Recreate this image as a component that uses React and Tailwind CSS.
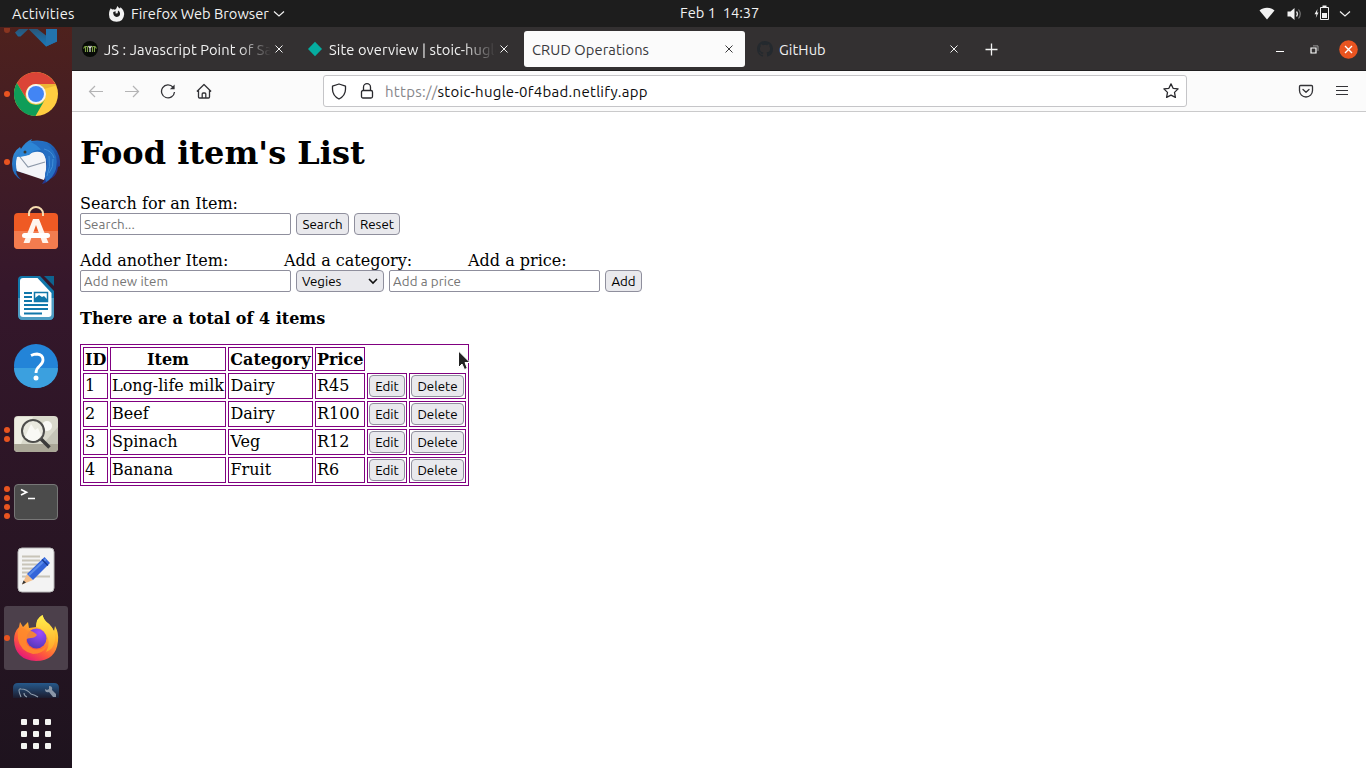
import React from "react";

const UI = "font-['Ubuntu','Noto_Sans',sans-serif]";

function Chevron({ className }) {
  return (
    <svg className={className} width="12" height="8" viewBox="0 0 12 8" fill="none" stroke="currentColor" strokeWidth="1.2">
      <path d="M1 1.5 6 6l5-4.5" />
    </svg>
  );
}

function TopBar() {
  return (
    <header className={`flex h-[27px] items-center bg-[#1d1d1d] text-[#f2f2f2] ${UI}`}>
      <div className="w-[108px] shrink-0 pl-3 text-[14.67px] leading-[26px] tracking-[0.25px] whitespace-nowrap">Activities</div>
      <svg width="17" height="16" viewBox="0 0 17 16" className="shrink-0" fill="#f2f2f2">
        <path fillRule="evenodd" d="M1.600 4.500 2.700 2.300 4.200 3.600Q5.500 3 7 3.700L8.300 2.500 9.400 0Q10.300 1.800 12 2.400L12.500 1.200Q16 4 16.200 8 15.700 15.700 8.600 15.800 1 15.500 1 8.500 1 6 1.600 4.500ZM7.600 5.300 5.200 6.100Q5 10.800 8.800 11 12.500 10.500 12 7 11.600 5 10 4.500L9.700 7.300 7.600 7.500Z" />
      </svg>
      <div className="ml-1.5 w-[139px] shrink-0 text-[14.67px] leading-[27px] whitespace-nowrap">Firefox Web Browser</div>
      <Chevron className="ml-[3px]" />
      <div className="ml-[395px] w-[90px] pb-px text-[14.67px] leading-[24px] whitespace-pre">Feb 1  14:37</div>
      <svg className="ml-auto" width="16" height="13" viewBox="0 0 16 13" fill="#f2f2f2"><path d="M.500 3.500C4.500-.200 11.500-.200 15.500 3.500L8 12.500Z" /></svg>
      <svg className="ml-3" width="16" height="14" viewBox="0 0 16 14" fill="none">
        <path d="M.500 4.500h3L7.500 1v12L3.500 9.500h-3Z" fill="#f2f2f2" />
        <path d="M9.500 4.500q2 2.500 0 5" stroke="#ddd" strokeWidth="1.300" />
        <path d="M11.500 2.500q3.500 4.500 0 9" stroke="#777" strokeWidth="1.200" />
      </svg>
      <svg className="mb-px ml-[11px]" width="16" height="16" viewBox="0 0 16 16" fill="none">
        <path d="M3.500 4 .5 9.300h2L1.800 13l2.700-5.500H3Z" fill="#f2f2f2" />
        <path d="M6.500 2.500h8v12h-8Z" stroke="#f2f2f2" />
        <path d="M8.500.5h4v2h-4ZM8 8h5v5H8Z" fill="#f2f2f2" />
      </svg>
      <Chevron className="mr-[15px] ml-[9px]" />
    </header>
  );
}

function Vscode() {
  return (
    <svg width="48" height="20" viewBox="0 0 48 20">
      <defs>
        <linearGradient id="vs" x1="0" y1="0" x2="0" y2="1">
          <stop offset="0" stopColor="#2a5678" /><stop offset="1" stopColor="#1679bd" />
        </linearGradient>
      </defs>
      <path d="M3 5.500 7 2h9.500L8.500 9.500H6ZM16.500 2h9L34 8.500V2h11v12.500L34 19.500Z" fill="url(#vs)" />
      <path d="M34 2h11v12.500L34 19.500Z" fill="#2373ad" />
    </svg>
  );
}

function Chrome() {
  return (
    <svg width="46" height="46" viewBox="0 0 46 46">
      <circle cx="23" cy="23" r="22" fill="#ffcd40" />
      <path d="M3.900 12A22 22 0 0 1 42.500 13H23A10.500 10.500 0 0 0 13.500 28Z" fill="#db4437" />
      <path d="M3.900 12A22 22 0 0 0 22.500 45L32 28.500A10.500 10.500 0 0 1 13.500 28Z" fill="#0f9d58" />
      <path d="M23 13h19.500l.7 1.500L31 18Z" fill="#e0a52f" opacity=".6" />
      <circle cx="23" cy="23" r="10" fill="#f4f4f4" />
      <circle cx="23" cy="23" r="8" fill="#4285f4" />
    </svg>
  );
}

function Thunderbird() {
  return (
    <svg width="50" height="50" viewBox="0 0 50 50">
      <defs>
        <linearGradient id="tb" x1="0" y1="0" x2="1" y2="1">
          <stop offset="0" stopColor="#3d9be0" /><stop offset=".5" stopColor="#1d63b7" /><stop offset="1" stopColor="#2a1e75" />
        </linearGradient>
      </defs>
      <path d="M1 27Q1 15 9 10l1 2q4-7 11-10l-1 2q16-2 23 6 7 8 6 19l-2 1q-1 8-6 11l-2 1q-3 4-8 5l3-5-9-3-20-5q1 6 6 9Q1 39 1 27Z" fill="url(#tb)" />
      <path d="M6 20q6-1 12-2 4-4 11-3 6 1 6 11 1 9-2 17L6 34Q4 27 6 20Z" fill="#f3f5f8" />
      <path d="m9 20 8 10 17-5" fill="none" stroke="#8c98a8" strokeWidth="1.200" />
      <path d="M8 20Q9 6 24 5q8 1 9 8-10-1-14 4-6 3-11 3Z" fill="#2d86d6" />
      <path d="M20 5q12-3 19 5 9 8 6 22-3 9-10 13-2-7 0-12 2-8-1-14-4-9-14-14Z" fill="#246ec2" />
      <path d="M33 12q8 2 10 9M38 19q2 11-2 20M42 22q1 8-4 14" fill="none" stroke="#418fd8" strokeWidth="1" />
      <circle cx="14" cy="15" r="1.500" fill="#3a3a32" />
    </svg>
  );
}

function Software() {
  return (
    <svg width="46" height="46" viewBox="0 0 46 46" className="-mt-1 h-[46px]">
      <path d="M16 12V8.500a7 6.500 0 0 1 14 0V12" fill="none" stroke="#f6dcb0" strokeWidth="2" />
      <rect x="1" y="8" width="44" height="36" rx="4" fill="#ef5a24" />
      <path d="M1 26h44v14q0 4-4 4H5q-4 0-4-4Z" fill="#f37c4f" />
      <path d="M16 8v3M30 8v3" stroke="#f6dcb0" strokeWidth="2" />
      <path d="M20 14h6l9.500 24h-6l-6.500-18-6.500 18h-6Z" fill="#fff4ed" />
      <rect x="9" y="28" width="28" height="5" rx="2.500" fill="#fff" />
    </svg>
  );
}

function Writer() {
  return (
    <svg width="46" height="46" viewBox="0 0 46 46">
      <path d="M9 1h18l14 15v24q0 5-5 5H10q-5 0-5-5V5q0-4 4-4Z" fill="#1177aa" />
      <path d="M5 23h36v17q0 5-5 5H10q-5 0-5-5Z" fill="#4d9cc2" />
      <path d="M31 1h10v10Z" fill="#0e638f" />
      <path d="M10 3h14.500L38.500 18v21q0 3-3 3H10q-3 0-3-3V6q0-3 3-3Z" fill="#fff" />
      <path d="M11 18h8M11 22h8M11 26h8M11 30h24M11 34h24M11 38.500h18" stroke="#1177aa" strokeWidth="2" />
      <rect x="21.500" y="17.500" width="13" height="9" fill="#fff" stroke="#1177aa" strokeWidth="1.500" />
      <path d="m22 26 0-3 4-3 3 2 2-1 3 3v3Z" fill="#1177aa" />
    </svg>
  );
}

function Help() {
  return (
    <svg width="46" height="46" viewBox="0 0 46 46">
      <circle cx="23" cy="23" r="22" fill="#2384d8" />
      <path d="M1 25h44a22 20 0 0 1-44 0Z" fill="#3ba0df" />
      <path d="M18 12.500q3-1.500 6-1.500 6 .5 6 6 0 3-3.500 6-3.500 3-3.500 7" fill="none" stroke="#fff" strokeWidth="2.800" />
      <circle cx="23" cy="35" r="2.500" fill="#fff" />
    </svg>
  );
}

function Viewer() {
  return (
    <svg width="46" height="46" viewBox="0 0 46 46">
      <rect x="1" y="5" width="44" height="36" rx="4" fill="#d9d9cb" />
      <path d="M1 33h44v4q0 4-4 4H5q-4 0-4-4Z" fill="#aaa797" />
      <path d="m30 33 15-17v17Z" fill="#c5c5b7" />
      <path d="M2 8q0-2 3-2h15L8 33H2Z" fill="#edede2" />
      <circle cx="34" cy="15" r="5" fill="#fafaf6" />
      <path d="m28 28 8.500 8.500" stroke="#3b3b39" strokeWidth="3.500" />
      <circle cx="20" cy="20" r="11" fill="#e9e9df" stroke="#4d4d4b" strokeWidth="2" />
      <path d="m12 26 6-13 4 6 3-2 3 7q-3 6-8 6-5-1-8-4Z" fill="#f9f9f5" />
    </svg>
  );
}

function Terminal() {
  return (
    <svg width="46" height="46" viewBox="0 0 46 46">
      <rect x="1.500" y="5.500" width="43" height="35" rx="3.500" fill="#4b4b4b" stroke="#777" />
      <path d="m8 10.500 5.500 2.700L8 16M15 19.500h7" fill="none" stroke="#fff" strokeWidth="1.700" />
    </svg>
  );
}

function Editor() {
  return (
    <svg width="46" height="46" viewBox="0 0 46 46">
      <rect x="5" y="1" width="36" height="44" rx="4" fill="#f3f3f3" stroke="#b9b9b9" />
      <path d="M9 9.500h18M9 13.500h18M9 17.500h16M9 21.500h15M9 25.500h12M9 29.500h28" stroke="#c8c4b8" strokeWidth="1.800" />
      <path d="m14 27 6 6-11 4.500Z" fill="#f3be8b" />
      <path d="m9 37.500 1.500-4 2.500 2Z" fill="#333" />
      <path d="M14 27 31.500 10l5.500 6-17 17Z" fill="#3465d9" />
      <path d="m16 28 17-16" stroke="#5a8bea" strokeWidth="2" />
      <path d="m29 12.500 6 6" stroke="#183b94" strokeWidth="1.500" />
    </svg>
  );
}

function Firefox() {
  return (
    <svg width="46" height="48" viewBox="0 0 46 48">
      <defs>
        <linearGradient id="ff" x1=".85" y1="0" x2=".25" y2="1">
          <stop offset="0" stopColor="#fff44f" /><stop offset=".35" stopColor="#ffb52a" /><stop offset=".7" stopColor="#ff5a3c" /><stop offset="1" stopColor="#e3107e" />
        </linearGradient>
        <linearGradient id="tail" x1="0" y1="0" x2="0" y2="1">
          <stop offset="0" stopColor="#fff04c" /><stop offset="1" stopColor="#ffa328" />
        </linearGradient>
        <radialGradient id="globe" cx=".65" cy=".2" r=".9">
          <stop offset="0" stopColor="#a04bff" /><stop offset="1" stopColor="#4f37b5" />
        </radialGradient>
      </defs>
      <path d="M29.500 1Q31 7 36 10q3 3 5 7l1-5Q46 19 45 27 43 47 23 47 2 46 1 26q0-8 5-13l1-5 3 5 5-5 1 6 7-1q1-9 6.500-12Z" fill="url(#ff)" />
      <path d="M29.500 1Q31 7 36 10q7 7 6 16-1 9-9 12 6-10-1-19-3-5-9-6 0-9 6.500-12Z" fill="url(#tail)" />
      <circle cx="23.500" cy="24.500" r="10" fill="url(#globe)" />
      <path d="M6 14q4-1 8 3 4-1 8 2l2 2q-2 3-6 3-4 0-5 2 0 6 7 9 7 2 14-3-4 8-14 8Q7 37 5 25q-1-6 1-11Z" fill="#ff8a2b" opacity=".9" />
    </svg>
  );
}

function Workbench() {
  return (
    <svg width="46" height="16" viewBox="0 0 46 16">
      <defs>
        <linearGradient id="wb" x1="0" y1="0" x2="0" y2="1">
          <stop offset="0" stopColor="#26598b" /><stop offset="1" stopColor="#1c1c2e" />
        </linearGradient>
      </defs>
      <path d="M0 16V6q0-5 5-5h36q5 0 5 5v10Z" fill="url(#wb)" />
      <path d="M8 15Q4 6 8 7q6 0 10 5 4 1 7 3M11 11q0 3 3 4" fill="none" stroke="#8e9dad" strokeWidth="1.100" />
      <path d="M32 7q0 4 4 3l4 5h3v-3l-4-4q1-4-3-4v3l-2 1Z" fill="#8a97a8" />
    </svg>
  );
}

const launchers = [
  { icon: Chrome, dots: 1 },
  { icon: Thunderbird, dots: 1 },
  { icon: Software, dots: 0 },
  { icon: Writer, dots: 0 },
  { icon: Help, dots: 0 },
  { icon: Viewer, dots: 2 },
  { icon: Terminal, dots: 4 },
  { icon: Editor, dots: 0 },
  { icon: Firefox, dots: 1, active: true },
];

function Dock() {
  return (
    <aside className="flex w-[72px] shrink-0 flex-col bg-linear-to-b from-[#4e211d] via-[#35172b] via-35% to-[#1e131e]">
      <div className="flex h-[33px] items-start pl-1">
        <i className="mt-[1px] h-[5px] w-[6px] rounded-b-full bg-[#8a3520]" />
        <div className="ml-[2px]"><Vscode /></div>
      </div>
      {launchers.map(({ icon: Icon, dots, active }, i) => (
        <div key={i} className="flex h-[68px] items-center pl-1">
          <div className={`flex h-16 w-16 items-center rounded-[3px] ${active ? "bg-[#4c404b]" : ""}`}>
            <div className="flex w-[6px] shrink-0 flex-col gap-[3px]">
              {Array.from({ length: dots }, (_, d) => <i key={d} className="size-[6px] rounded-full bg-[#e95420]" />)}
            </div>
            <div className="flex w-[52px] shrink-0 justify-center">
              <Icon />
            </div>
          </div>
        </div>
      ))}
      <div className="flex h-[28px] items-start justify-center pt-[10px]"><Workbench /></div>
      <div className="flex h-[68px] items-center justify-center">
        <div className="grid grid-cols-3 gap-[6px]">
          {Array.from({ length: 9 }, (_, i) => <i key={i} className="size-[6px] rounded-[1px] bg-[#f4f4f2]" />)}
        </div>
      </div>
    </aside>
  );
}

function Close() {
  return (
    <svg className="shrink-0" width="8" height="8" viewBox="0 0 8 8" stroke="currentColor" strokeWidth="1"><path d="m.5.500 7 7m0-7-7 7" /></svg>
  );
}

function Tab({ icon, title, active, fade }) {
  return (
    <div className={`mx-[2px] flex h-9 w-[221px] shrink-0 items-center rounded-[3px] pr-3 pl-2 ${active ? "bg-[#fbfbfb] text-[#39393b]" : "text-[#f1f1f1]"}`}>
      {icon && <span className="mr-[6px] shrink-0">{icon}</span>}
      <span className={`mr-[4px] min-w-0 flex-1 overflow-hidden pt-[2px] text-[14.67px] leading-[20px] tracking-[0.1px] whitespace-nowrap ${fade ? "mask-[linear-gradient(to_right,black_80%,transparent)]" : ""}`}>{title}</span>
      <Close />
    </div>
  );
}

function Tabs() {
  return (
    <div className={`flex h-[44px] items-start border-b border-[#1f1e1f] bg-[#333031] pt-1 text-[#f1f1f1] ${UI}`}>
      <Tab
        fade
        title="JS : Javascript Point of Sale"
        icon={
          <svg width="16" height="16" viewBox="0 0 16 16">
            <circle cx="8" cy="8" r="8" fill="#080b07" />
            <path d="M1.500 7.500 3 5.500h2.500M14.500 7.500 13 5.500h-2.500M3.500 6v5M5.500 5.500V11M10.500 5.500V11M12.500 6v5" stroke="#7da044" fill="none" strokeWidth="1.100" />
            <path d="m6.500 5 1.500 2L9.500 5M8 7v4" stroke="#d8ded0" fill="none" strokeWidth="1.300" />
          </svg>
        }
      />
      <Tab
        fade
        title="Site overview | stoic-hugle-0f4bad"
        icon={<svg width="16" height="16" viewBox="0 0 16 16"><path d="m8 .800 7 7.200-7 7.200L1 8Z" fill="#05ada0" /></svg>}
      />
      <Tab active title="CRUD Operations" />
      <Tab
        title="GitHub"
        icon={
          <svg width="16" height="16" viewBox="0 0 16 16" fill="#24292e">
            <path d="M8 0C3.580 0 0 3.580 0 8c0 3.540 2.290 6.530 5.470 7.590.4.070.55-.17.55-.38 0-.19-.01-.82-.01-1.490-2.010.37-2.530-.49-2.690-.94-.09-.23-.48-.94-.82-1.130-.28-.15-.68-.52-.01-.53.63-.01 1.080.58 1.230.82.72 1.210 1.870.87 2.330.66.07-.52.28-.87.51-1.070-1.780-.2-3.640-.89-3.640-3.950 0-.87.31-1.590.82-2.150-.08-.2-.36-1.020.08-2.120 0 0 .67-.21 2.200.82a7.500 7.500 0 0 1 4 0c1.530-1.040 2.200-.82 2.200-.82.44 1.100.16 1.920.08 2.120.51.56.82 1.270.82 2.150 0 3.070-1.870 3.750-3.650 3.950.29.25.54.73.54 1.480 0 1.070-.01 1.930-.01 2.200 0 .21.15.46.55.38A8 8 0 0 0 16 8c0-4.420-3.580-8-8-8Z" />
          </svg>
        }
      />
      <div className="flex h-9 flex-1 items-center">
        <svg className="ml-[13px]" width="13" height="13" viewBox="0 0 13 13" stroke="#f3f3f3" strokeWidth="1.300"><path d="M6.500.500v12m-6-6h12" /></svg>
        <svg className="ml-auto" width="8" height="8" viewBox="0 0 8 8"><path d="M0 6h8v1H0Z" fill="#fff" /></svg>
        <svg className="mr-[20px] ml-[26px]" width="9" height="9" viewBox="0 0 9 9" fill="none">
          <path d="M1 3h5v5H1Z" stroke="#fff" strokeWidth="1.200" /><path d="M3 .900h5v5" stroke="#999" />
        </svg>
        <svg className="mr-[8px]" width="19" height="19" viewBox="0 0 19 19">
          <circle cx="9.500" cy="9.500" r="9.300" fill="#e95420" /><path d="m6 6 7 7m0-7-7 7" stroke="#fff" strokeWidth="1.400" />
        </svg>
      </div>
    </div>
  );
}

function Toolbar() {
  return (
    <div className="flex h-[41px] items-center border-b border-[#cacacb] bg-[#fbfbfb] text-[#3b3b40]">
      <svg className="ml-4 text-[#b4b4b5]" width="16" height="16" viewBox="0 0 16 16" fill="none" stroke="currentColor" strokeWidth="1.200"><path d="M15 8.500H1.500M7 3 1.500 8.500 7 14" /></svg>
      <svg className="ml-5 text-[#b4b4b5]" width="16" height="16" viewBox="0 0 16 16" fill="none" stroke="currentColor" strokeWidth="1.200"><path d="M1 8.500h13.500M9 3l5.500 5.500L9 14" /></svg>
      <svg className="ml-5" width="16" height="16" viewBox="0 0 16 16" fill="none">
        <path d="M13 4.200A6.500 6.500 0 1 0 14.500 9" stroke="#333337" strokeWidth="1.300" /><path d="M14.600 1.500v4.700H9.900Z" fill="#333337" />
      </svg>
      <svg className="ml-[19.500px]" width="16" height="16" viewBox="0 0 16 16" fill="none" stroke="#333337" strokeWidth="1.300" strokeLinejoin="round">
        <path d="M.900 8.500 8 1.500l7.100 7M2.500 7.500V14q0 1 1 1h9q1 0 1-1V7.500M6.200 15v-4q0-1 1-1h1.600q1 0 1 1v4" />
      </svg>
      <div className="ml-[111.500px] flex h-8 w-[864px] shrink-0 items-center rounded-[3px] border border-[#c5c5c8] bg-white">
        <svg className="ml-[7px]" width="16" height="17" viewBox="0 0 16 17" fill="none" stroke="#29292d" strokeWidth="1.300" strokeLinejoin="round">
          <path d="M8 1 14.500 3.200v3Q14.500 12.500 8 16 1.500 12.500 1.500 6.200v-3Z" />
        </svg>
        <svg className="ml-3" width="16" height="16" viewBox="0 0 16 16" fill="none" stroke="#29292d" strokeWidth="1.300">
          <rect x="2.500" y="7.500" width="11" height="7.500" rx="1.500" /><path d="M4.500 7.500V4.200a3.500 3.500 0 0 1 7 0v3.300" />
        </svg>
        <span className={`ml-[10px] pt-[2px] text-[15px] leading-[20px] tracking-[0.28px] whitespace-nowrap ${UI}`}><span className="text-[#86868a]">https://</span><span className="text-[#0c0c0d]">stoic-hugle-0f4bad.netlify.app</span></span>
        <svg className="mr-[7px] ml-auto" width="16" height="16" viewBox="0 0 16 16" fill="none" stroke="#29292d" strokeWidth="1.300" strokeLinejoin="round">
          <path d="m8 .900 2.100 4.400 5 .6-3.600 3.500.9 5-4.400-2.300-4.400 2.300.9-5L.900 5.900l5-.6Z" />
        </svg>
      </div>
      <svg className="ml-[111px]" width="16" height="16" viewBox="0 0 16 16" fill="none" stroke="#333337" strokeWidth="1.300" strokeLinecap="round" strokeLinejoin="round">
        <path d="M2.500 2.500h11q1 0 1 1v4a6.500 6.500 0 0 1-13 0v-4q0-1 1-1Z" /><path d="M5 6.500 8 9.300l3-2.800" />
      </svg>
      <svg className="ml-5" width="16" height="16" viewBox="0 0 16 16" stroke="#333337"><path d="M2 3.500h12M2 7.500h12M2 11.500h12" /></svg>
    </div>
  );
}

function Field({ placeholder }) {
  return <input placeholder={placeholder} className={`block h-[22px] w-[211px] rounded-[2px] border border-[#8f8f9d] bg-white px-[3px] text-[13.33px] leading-[18px] tracking-[0.1px] placeholder:text-[#757575] ${UI}`} />;
}

function Button({ className, children }) {
  return <button className={`flex h-[22px] shrink-0 items-center justify-center rounded-[4px] border border-[#8f8f9d] bg-[#e9e9ed] pt-px text-[13.33px] leading-[19px] text-black ${UI} ${className}`}>{children}</button>;
}

const items = [
  [1, "Long-life milk", "Dairy", "R45"],
  [2, "Beef", "Dairy", "R100"],
  [3, "Spinach", "Veg", "R12"],
  [4, "Banana", "Fruit", "R6"],
];

const cell = "border border-[#800080] p-px whitespace-nowrap";

function Page() {
  return (
    <main className="relative flex-1 bg-white pl-2 font-['DejaVu_Serif',serif] text-[16px] leading-[19px] text-black">
      <h1 className="pt-[22px] text-[32px] leading-[38px] font-bold">Food item's List</h1>
      <div className="pt-[22px]">Search for an Item:</div>
      <div className="flex gap-[5px]">
        <Field placeholder="Search..." />
        <Button className="w-[53px]">Search</Button>
        <Button className="w-[46px]">Reset</Button>
      </div>
      <div className="flex pt-4">
        <span className="w-[204px]">Add another Item:</span>
        <span className="w-[184px]">Add a category:</span>
        <span>Add a price:</span>
      </div>
      <div className="flex gap-[5px]">
        <Field placeholder="Add new item" />
        <Button className="w-[88px]">
          <span className="mr-auto ml-[5px]">Vegies</span>
          <svg className="mr-[5px]" width="10" height="7" viewBox="0 0 10 7" fill="none" stroke="#111" strokeWidth="1.600"><path d="m1 1 4 4 4-4" /></svg>
        </Button>
        <Field placeholder="Add a price" />
        <Button className="w-[37px]">Add</Button>
      </div>
      <h4 className="pt-[17px] pb-4 leading-[19px] font-bold">There are a total of 4 items</h4>
      <table className="w-[389px] table-fixed border-separate border-spacing-[2px] border border-[#800080]">
        <colgroup>
          <col className="w-[25px]" /><col className="w-[116px]" /><col className="w-[85px]" />
          <col className="w-[50px]" /><col className="w-[40px]" /><col className="w-[57px]" />
        </colgroup>
        <thead>
          <tr className="h-6">
            {["ID", "Item", "Category", "Price"].map((h) => <th key={h} className={cell}>{h}</th>)}
          </tr>
        </thead>
        <tbody>
          {items.map((row) => (
            <tr key={row[0]} className="h-[26px]">
              {row.map((v, i) => <td key={i} className={`${cell} pb-[2px] ${i === 2 ? "pl-[1.5px]" : ""}`}>{v}</td>)}
              <td className={cell}><Button className="w-full">Edit</Button></td>
              <td className={cell}><Button className="w-full">Delete</Button></td>
            </tr>
          ))}
        </tbody>
      </table>
      <svg className="absolute top-[238px] left-[385px]" width="14" height="22" viewBox="0 0 14 22">
        <path d="M1.500 1v16.500l3.500-3.500 2.500 5.500 2.800-1.200L8 12.500h5Z" fill="#222" stroke="#fff" strokeWidth="1" />
      </svg>
    </main>
  );
}

export default function App() {
  return (
    <div className="flex h-[768px] w-[1366px] flex-col overflow-hidden">
      <TopBar />
      <div className="flex min-h-0 flex-1">
        <Dock />
        <div className="flex min-w-0 flex-1 flex-col">
          <Tabs />
          <Toolbar />
          <Page />
        </div>
      </div>
    </div>
  );
}
